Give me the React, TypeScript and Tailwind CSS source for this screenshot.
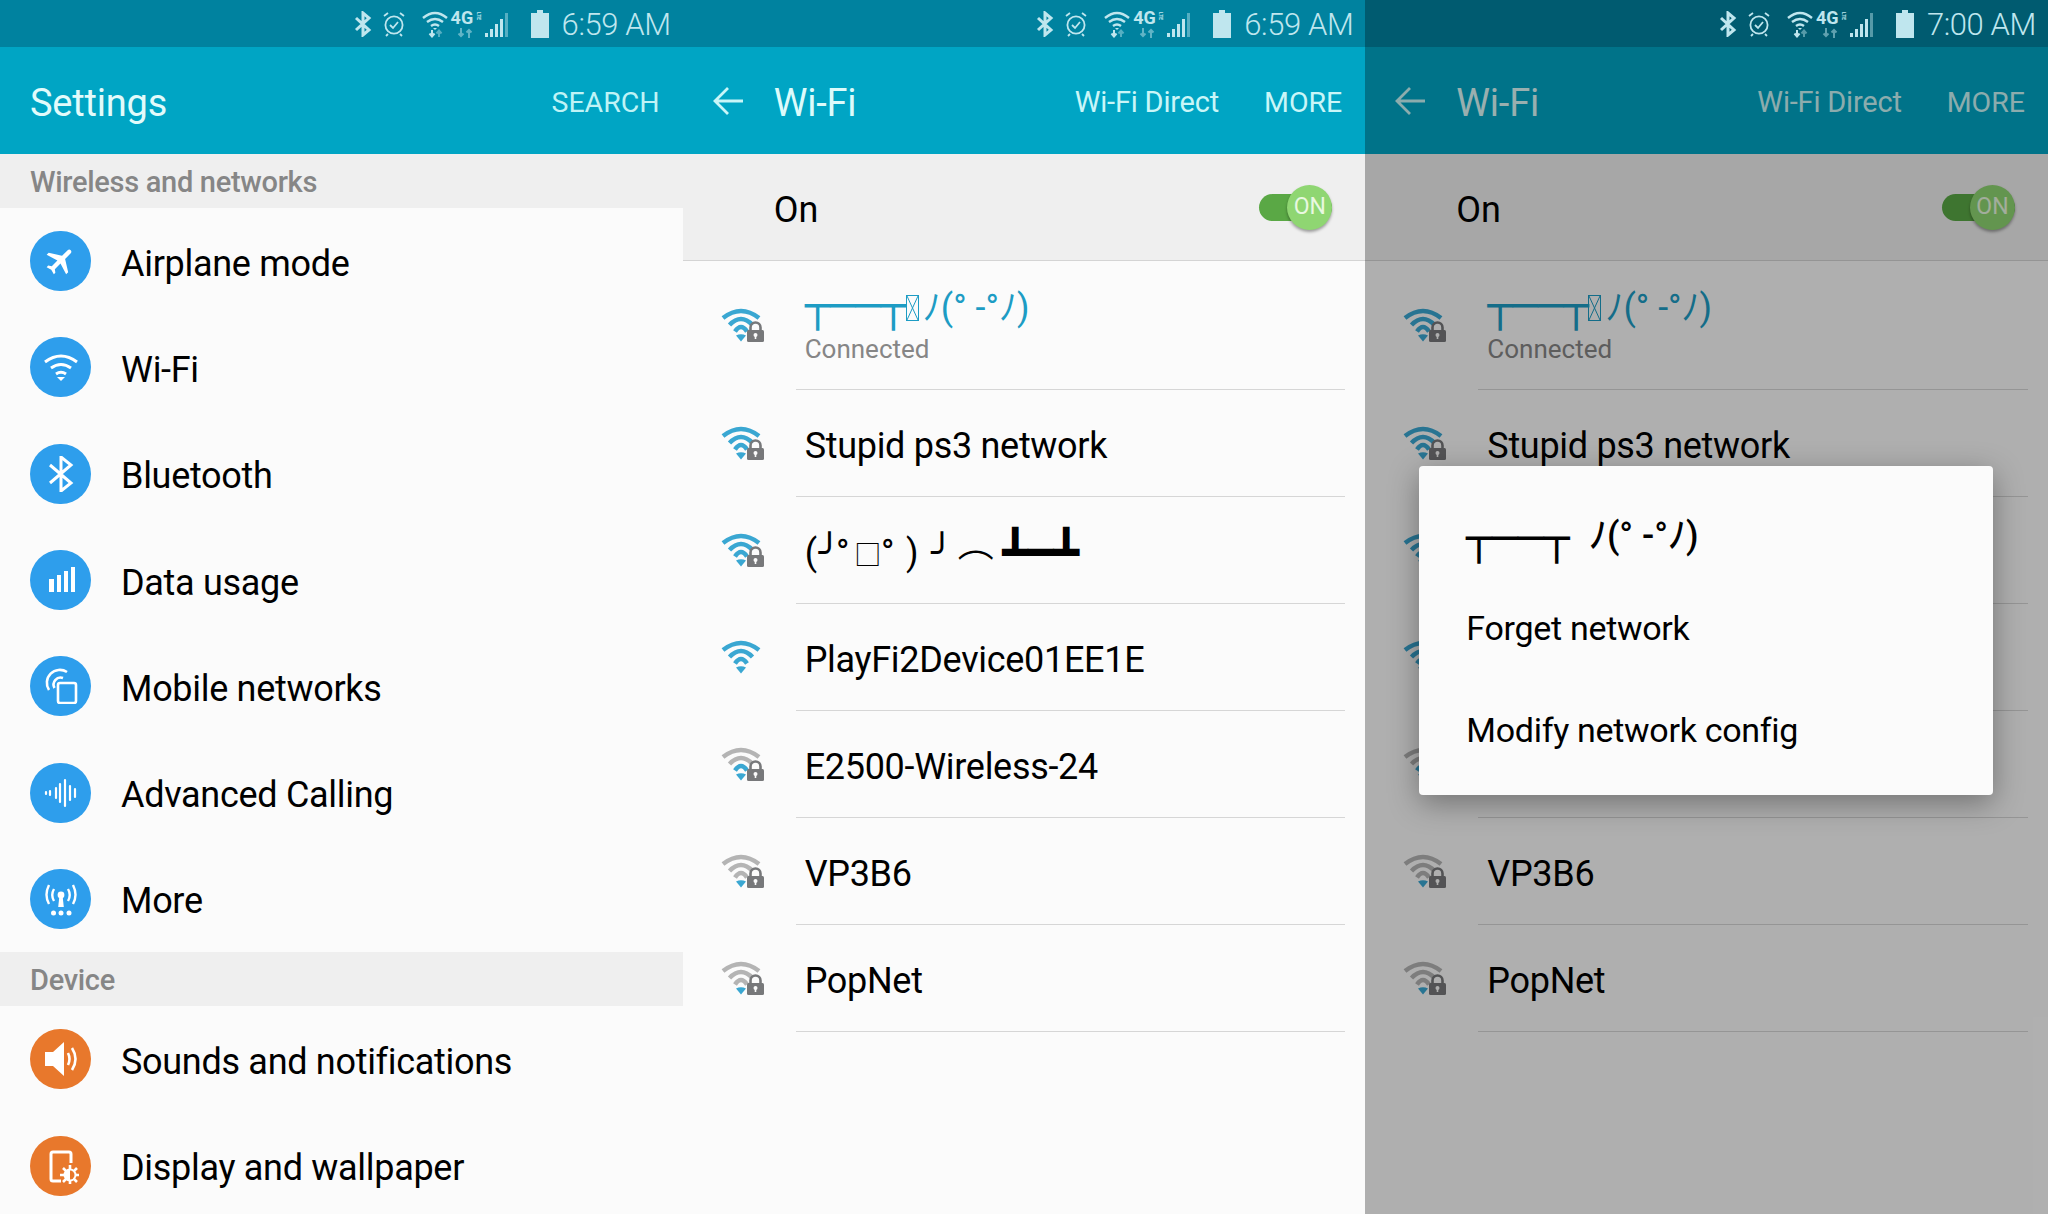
const font = "font-['Roboto',sans-serif]";
const cjk = "font-['Roboto','Noto_Sans_CJK_JP',sans-serif]";
const mono = "font-['DejaVu_Sans_Mono',monospace]";

function Bluetooth() {
  return (
    <svg viewBox="0 0 18 26" className="w-[18px] h-[26px]" fill="none" stroke="currentColor" strokeWidth="3">
      <path d="M2 7l13 12-6 5V2l6 5L2 19" />
    </svg>
  );
}

function Alarm() {
  return (
    <svg viewBox="0 0 22 26" className="w-[22px] h-[26px]" fill="none" stroke="currentColor" strokeWidth="1.8">
      <circle cx="11" cy="14" r="8.6" />
      <path d="M7 14l3 3 5-6" />
      <path d="M1 5l4-3M21 5l-4-3M5 23l-2 2M17 23l2 2" />
    </svg>
  );
}

function WifiData() {
  return (
    <svg viewBox="0 0 26 28" className="w-[26px] h-[28px]" fill="none" stroke="currentColor">
      <path d="M1 8Q13-2 25 8" strokeWidth="2.4" />
      <path d="M5 12q8-6 16 0" strokeWidth="2.4" />
      <path d="M9 16q4-3 8 0" strokeWidth="2.4" />
      <path d="M11 18h4l-2 2z" fill="currentColor" stroke="none" />
      <path d="M10 20v6M7.5 23.5l2.5 3 2.5-3" strokeWidth="2" />
      <path d="M17 27v-6M14.5 23.5l2.5-3 2.5 3" strokeWidth="2" opacity="0.45" />
    </svg>
  );
}

function FourG() {
  return (
    <div className="relative w-[30px] h-[28px]">
      <span className="absolute left-0 top-[-1px] text-[18px] leading-[18px] font-bold">4G</span>
      <span className="absolute right-0 top-[2px] text-[5px] leading-[5px] font-bold [writing-mode:vertical-rl]">LTE</span>
      <svg viewBox="0 0 20 10" className="absolute left-[5px] top-[18px] w-[20px] h-[10px] opacity-50" fill="none" stroke="currentColor" strokeWidth="2">
        <path d="M5 0v8M2.5 5.5L5 8l2.5-2.5M13 10V2M10.5 4.5L13 2l2.5 2.5" />
      </svg>
    </div>
  );
}

function Signal() {
  return (
    <svg viewBox="0 0 25 26" className="w-[25px] h-[26px]" fill="currentColor">
      <path d="M1 22h3v4H1zM6 18h3v8H6zM11 13h3v13h-3zM16 8h3v18h-3z" />
      <path d="M21 2h3v24h-3z" opacity="0.45" />
    </svg>
  );
}

function Battery() {
  return (
    <svg viewBox="0 0 18 28" className="w-[18px] h-[28px]" fill="currentColor">
      <path d="M6 0h6v3h6v25H0V3h6z" />
    </svg>
  );
}

function StatusBar({ time, dim }: { time: string; dim?: boolean }) {
  return (
    <div className={`relative z-10 h-[47px] flex items-center justify-end pr-[12px] text-[#bfe6ee] ${dim ? "bg-[#005b70]" : "bg-[#00829f]"}`}>
      <Bluetooth />
      <div className="ml-[11px]"><Alarm /></div>
      <div className="ml-[17px]"><WifiData /></div>
      <div className="ml-[3px]"><FourG /></div>
      <div className="ml-[3px]"><Signal /></div>
      <div className="ml-[22px]"><Battery /></div>
      <span className="ml-[13px] text-[31px] leading-none font-light tracking-[-0.4px] pt-[2px]">{time}</span>
    </div>
  );
}

function IconCircle({ color, children }: { color: string; children: React.ReactNode }) {
  return (
    <div className={`w-[61px] h-[60px] rounded-full flex items-center justify-center shrink-0 text-white ${color}`}>
      <svg viewBox="0 0 36 36" className="w-[36px] h-[36px]" fill="currentColor">{children}</svg>
    </div>
  );
}

const blue = "bg-[#2e9eec]";
const orange = "bg-[#e8782c]";

const airplane = (
  <g transform="translate(18 18) rotate(45) scale(1.45) translate(-12 -12)">
    <path d="M21 16v-2l-8-5V3.5c0-.83-.67-1.5-1.5-1.5S10 2.67 10 3.5V9l-8 5v2l8-2.5V19l-2 1.5V22l3.5-1 3.5 1v-1.5L13 19v-5.5l8 2.5z" />
  </g>
);

const wifiGlyph = (
  <g fill="none" stroke="currentColor" strokeWidth="3">
    <path d="M2 13q16-12 32 0M8 19q10-7 20 0M13 25q5-3.5 10 0" />
    <path d="M14 28h8l-4 4z" fill="currentColor" stroke="none" />
  </g>
);

const bluetoothGlyph = (
  <path d="M7 9l21 18-10 8V1l10 8L7 27" fill="none" stroke="currentColor" strokeWidth="3" />
);

const dataGlyph = (
  <path d="M6 17h5v13H6zM14 13h4v17h-4zM21 9h4v21h-4zM28 5h4v25h-4z" />
);

const mobileGlyph = (
  <g fill="none" stroke="currentColor" strokeWidth="2.6">
    <rect x="15" y="15" width="18" height="20" rx="2" />
    <path d="M6 22A13 13 0 0 1 24 4M11.5 20A7 7 0 0 1 20 10" />
  </g>
);

const callingGlyph = (
  <g stroke="currentColor" strokeWidth="2.2" strokeLinecap="round">
    <path d="M3 17v2M7 16v4M13 13v10M17 9v18M22 5v26M27 11v14M32 14v8" />
  </g>
);

const moreGlyph = (
  <g>
    <circle cx="18" cy="14" r="3.4" />
    <path d="M16.4 15h3.2l1.2 11h-5.6z" />
    <g fill="none" stroke="currentColor" strokeWidth="2.4">
      <path d="M11 8q-3.500 6 0 12M25 8q3.500 6 0 12M6 4q-5 10 0 19M30 4q5 10 0 19" />
    </g>
    <circle cx="10.500" cy="32" r="2.500" />
    <circle cx="18" cy="32" r="2.500" />
    <circle cx="26" cy="32" r="2.500" />
  </g>
);

const soundGlyph = (
  <g>
    <path d="M2 11h8L21 1v34L10 25H2z" />
    <path d="M25 12q3 6 0 12M29 7q7 11 0 22" fill="none" stroke="currentColor" strokeWidth="2.6" />
  </g>
);

const displayGlyph = (
  <g>
    <path d="M18 33H10a2 2 0 0 1-2-2V6a2 2 0 0 1 2-2h16a2 2 0 0 1 2 2v9" fill="none" stroke="currentColor" strokeWidth="3" />
    <path d="M27 17v20M17 27h20M20 20l14 14M34 20L20 34" stroke="currentColor" strokeWidth="2.6" />
    <circle cx="27" cy="27" r="6.5" />
    <path d="M27 22.500a4.500 4.500 0 0 1 0 9z" fill="#e8782c" />
  </g>
);

function SectionLabel({ label }: { label: string }) {
  return (
    <div className="h-[54px] bg-[#efefef] flex items-center pl-[30px] text-[29px] font-medium text-[#868686] tracking-[-0.3px]">
      <span className="pt-[3px]">{label}</span>
    </div>
  );
}

function SettingRow({ label, color, glyph }: { label: string; color: string; glyph: React.ReactNode }) {
  return (
    <div className="h-[106.3px] flex items-center pl-[30px] gap-[30px]">
      <IconCircle color={color}>{glyph}</IconCircle>
      <span className="pt-[5px] text-[36px] text-black tracking-[-0.3px]">{label}</span>
    </div>
  );
}

function WifiIcon({ level, lock }: { level: number; lock?: boolean }) {
  const on = "#3aa7d2";
  const off = "#b4b4b4";
  return (
    <svg viewBox="0 0 44 34" className="w-[44px] h-[34px]" fill="none" strokeWidth="4.500">
      <path d="M3 10Q21-4 39 10" stroke={level >= 4 ? on : off} />
      <path d="M9.500 17Q21 5 32.500 17" stroke={level >= 3 ? on : off} />
      <path d="M15 23.500Q21 14.500 27 23.500" stroke={level >= 2 ? on : off} />
      <path d="M16 27.500q5-2.500 10 0l-5 6z" fill={on} stroke="none" />
      {lock && (
        <g>
          <path d="M30.500 23v-3.500a5 5 0 0 1 10 0V23" stroke="#77787a" strokeWidth="2.600" />
          <rect x="27" y="22" width="17" height="12" rx="1.500" fill="#77787a" stroke="none" />
          <circle cx="35.500" cy="27" r="2" fill="#fbfbfb" stroke="none" />
          <path d="M34.700 27.500h1.600v3.500h-1.600z" fill="#fbfbfb" stroke="none" />
        </g>
      )}
    </svg>
  );
}

function TofuBox() {
  return (
    <svg viewBox="0 0 13 26" className="inline-block w-[13px] h-[26px] align-[-2px] mr-[4px]" fill="none" stroke="currentColor" strokeWidth="1">
      <rect x="0.5" y="0.5" width="12" height="25" />
      <path d="M1 1l11 24M12 1L1 25" />
    </svg>
  );
}

function TableFlip() {
  return (
    <span className="inline-flex items-baseline whitespace-nowrap leading-none">
      <span>(</span>
      <span className={`${mono} ml-[2px]`}>╯</span>
      <span className="ml-[-4px]">°</span>
      <span className="text-[27px] ml-[5px]">□</span>
      <span>°</span>
      <span className="ml-[12px]">)</span>
      <span className={`${mono} ml-[13px]`}>╯</span>
      <span className="ml-[5px] relative top-[-8px]">︵</span>
      <span className={`${mono} text-[43px] ml-[9px] relative top-[2px]`}>┻━┻</span>
    </span>
  );
}

const networks = [
  { id: "ps3", name: "Stupid ps3 network", level: 4, lock: true },
  { id: "flip", name: <TableFlip />, level: 4, lock: true },
  { id: "playfi", name: "PlayFi2Device01EE1E", level: 4, lock: false },
  { id: "e2500", name: "E2500-Wireless-24", level: 2, lock: true },
  { id: "vp3b6", name: "VP3B6", level: 1, lock: true },
  { id: "popnet", name: "PopNet", level: 1, lock: true },
];

function NetworkRow({ name, level, lock }: { name: React.ReactNode; level: number; lock?: boolean }) {
  return (
    <div className="h-[106px] flex items-center pl-[37px]">
      <WifiIcon level={level} lock={lock} />
      <div className="ml-[41px] flex-1 h-full flex items-center">
        <span className={`pt-[5px] text-[36px] text-black tracking-[-0.3px] ${cjk}`}>{name}</span>
      </div>
    </div>
  );
}

function WifiPanel({ time, dim }: { time: string; dim?: boolean }) {
  return (
    <div className="relative w-[682.67px] h-[1214px] bg-[#fbfbfb] overflow-hidden">
      <StatusBar time={time} dim={dim} />
      <div className="h-[107px] bg-[#00a5c4] flex items-center text-[#c9f6f8]">
        <svg viewBox="0 0 30 30" className="ml-[30px] w-[30px] h-[30px]" fill="none" stroke="currentColor" strokeWidth="2.8">
          <path d="M30 15H3M15 2L2 15l13 13" />
        </svg>
        <span className="ml-[31px] pt-[5px] text-[38px] text-[#dcfbfb] tracking-[-0.2px]">Wi-Fi</span>
        <span className="ml-auto pt-[5px] text-[29px] tracking-[-0.2px]">Wi-Fi Direct</span>
        <span className="ml-[45px] mr-[23px] pt-[5px] text-[28.5px]">MORE</span>
      </div>
      <div className="h-[107px] bg-[#efefef] border-b border-[#d4d4d4] flex items-center pl-[91px]">
        <span className="pt-[5px] text-[36px] text-black">On</span>
        <div className="ml-auto mr-[33px] relative w-[73px] h-[27px] rounded-full bg-[#5aa845]">
          <div className="absolute right-0 top-[-9px] w-[45px] h-[45px] rounded-full bg-[#8fd672] shadow-[0_2px_3px_rgba(0,0,0,0.35)] flex items-center justify-center text-[23px] text-[#e9f8e0]">
            ON
          </div>
        </div>
      </div>
      <div className="h-[128px] flex items-center pl-[37px]">
        <WifiIcon level={4} lock />
        <div className="ml-[41px] flex-1 h-full flex flex-col justify-center">
          <div className={`h-[44px] flex items-center text-[36px] leading-none text-[#1d9cc4] whitespace-nowrap ${cjk}`}>
            <span className={`${mono} text-[42px] relative top-[-2px]`}>┬──┬</span>
            <TofuBox />
            <span>ﾉ(° -°ﾉ)</span>
          </div>
          <div className="text-[26px] leading-[30px] text-[#868686] mt-[4px]">Connected</div>
        </div>
      </div>
      <div className="ml-[113px] mr-[20px] h-[1px] bg-[#d6d6d6]" />
      {networks.map((net) => (
        <div key={net.id}>
          <NetworkRow name={net.name} level={net.level} lock={net.lock} />
          <div className="ml-[113px] mr-[20px] h-[1px] bg-[#d6d6d6]" />
        </div>
      ))}
      {dim && (
        <>
          <div className="absolute inset-x-0 top-[47px] bottom-0 bg-black/30" />
          <div className="absolute left-[54px] top-[466px] w-[574px] h-[329px] rounded-[4px] bg-[#fbfbfb] shadow-[0_8px_30px_rgba(0,0,0,0.35)] pl-[47px] pt-[34px] text-black">
            <div className={`h-[72px] mb-[5px] flex items-center text-[36px] leading-none whitespace-nowrap ${cjk}`}>
              <span className={`${mono} text-[43px] relative top-[2px]`}>┬──┬</span>
              <span className="ml-[19px] font-medium">ﾉ(° -°ﾉ)</span>
            </div>
            <div className="h-[102px] flex items-center text-[34px] tracking-[-0.3px]">Forget network</div>
            <div className="h-[102px] flex items-center text-[34px] tracking-[-0.3px]">Modify network config</div>
          </div>
        </>
      )}
    </div>
  );
}

function SettingsPanel() {
  return (
    <div className="w-[682.67px] h-[1214px] bg-[#fbfbfb] overflow-hidden">
      <StatusBar time="6:59 AM" />
      <div className="h-[107px] bg-[#00a5c4] flex items-center justify-between pl-[30px] pr-[23px]">
        <span className="pt-[5px] text-[38px] text-[#e2fbfb] tracking-[-0.2px]">Settings</span>
        <span className="pt-[5px] text-[28.5px] text-[#bff3f6]">SEARCH</span>
      </div>
      <SectionLabel label="Wireless and networks" />
      <SettingRow label="Airplane mode" color={blue} glyph={airplane} />
      <SettingRow label="Wi-Fi" color={blue} glyph={wifiGlyph} />
      <SettingRow label="Bluetooth" color={blue} glyph={bluetoothGlyph} />
      <SettingRow label="Data usage" color={blue} glyph={dataGlyph} />
      <SettingRow label="Mobile networks" color={blue} glyph={mobileGlyph} />
      <SettingRow label="Advanced Calling" color={blue} glyph={callingGlyph} />
      <SettingRow label="More" color={blue} glyph={moreGlyph} />
      <SectionLabel label="Device" />
      <SettingRow label="Sounds and notifications" color={orange} glyph={soundGlyph} />
      <SettingRow label="Display and wallpaper" color={orange} glyph={displayGlyph} />
    </div>
  );
}

export default function App() {
  return (
    <div className={`flex w-[2048px] h-[1214px] overflow-hidden ${font}`}>
      <SettingsPanel />
      <WifiPanel time="6:59 AM" />
      <WifiPanel time="7:00 AM" dim />
    </div>
  );
}
